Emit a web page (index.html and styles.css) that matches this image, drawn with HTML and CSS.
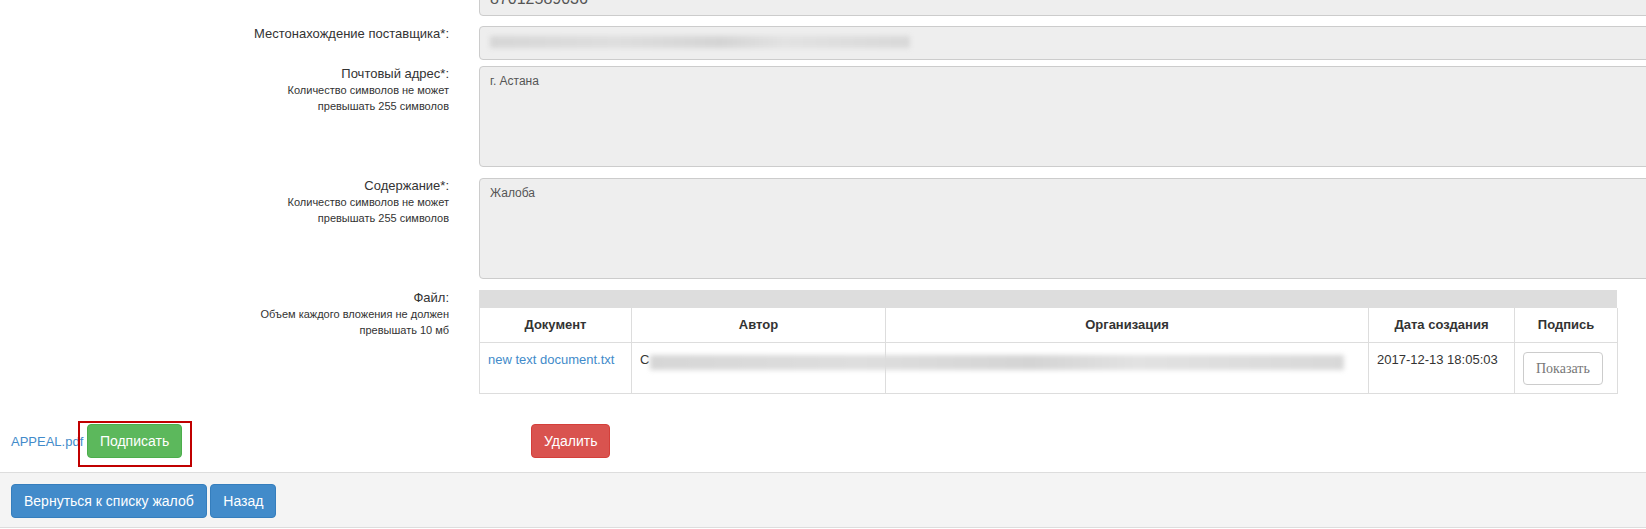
FILE: index.html
```html
<!DOCTYPE html>
<html lang="ru">

<head>
    <meta charset="UTF-8">
    <title>Жалоба</title>
    <link rel="stylesheet" href="styles.css">
</head>

<body>
    <!-- Complaint form -->
    <div class="complaint-form">
        <div class="form-row">
            <div class="form-label">Контактный номер*:</div>
            <div class="form-field">
                <div class="form-control phone">87012589036</div>
            </div>
        </div>

        <div class="form-row row-tight">
            <div class="form-label">Местонахождение поставщика*:</div>
            <div class="form-field">
                <div class="form-control"><span class="redact redact-input"></span></div>
            </div>
        </div>

        <div class="form-row">
            <div class="form-label">
                Почтовый адрес*:
                <small>Количество символов не может<br>превышать 255 символов</small>
            </div>
            <div class="form-field">
                <div class="form-control area">г. Астана</div>
            </div>
        </div>

        <div class="form-row">
            <div class="form-label">
                Содержание*:
                <small>Количество символов не может<br>превышать 255 символов</small>
            </div>
            <div class="form-field">
                <div class="form-control area">Жалоба</div>
            </div>
        </div>

        <div class="form-row">
            <div class="form-label">
                Файл:
                <small>Объем каждого вложения не должен<br>превышать 10 мб</small>
            </div>
            <div class="form-field">
                <div class="files-bar"></div>
                <table class="files-table">
                    <colgroup>
                        <col style="width: 152px">
                        <col style="width: 254px">
                        <col style="width: 483px">
                        <col style="width: 146px">
                        <col style="width: 103px">
                    </colgroup>
                    <thead>
                        <tr>
                            <th>Документ</th>
                            <th>Автор</th>
                            <th>Организация</th>
                            <th>Дата создания</th>
                            <th>Подпись</th>
                        </tr>
                    </thead>
                    <tbody>
                        <tr>
                            <td><a href="#">new text document.txt</a></td>
                            <td class="author-cell">С<span class="redact redact-row"></span></td>
                            <td></td>
                            <td>2017-12-13 18:05:03</td>
                            <td><button class="show-btn">Показать</button></td>
                        </tr>
                    </tbody>
                </table>
            </div>
        </div>
    </div>

    <!-- Sign / delete -->
    <div class="actions">
        <div class="actions-left">
            <a href="#">APPEAL.pdf</a>
            <span class="highlight"><a href="#" class="btn btn-success">Подписать</a></span>
        </div>
        <a href="#" class="btn btn-danger">Удалить</a>
    </div>

    <!-- Footer buttons -->
    <div class="footer-bar">
        <a href="#" class="btn btn-primary">Вернуться к списку жалоб</a>
        <a href="#" class="btn btn-primary">Назад</a>
    </div>
</body>

</html>
```

FILE: styles.css
```css
/* Global Styles */
body {
    margin: 0;
    font-family: "Liberation Sans", Arial, sans-serif;
    font-size: 13px;
    line-height: 18px;
    color: #333;
    background: #fff;
    overflow: hidden;
}

a {
    color: #428bca;
    text-decoration: none;
}

/* Form */
.complaint-form {
    margin-top: -18px;
}

.form-row {
    display: grid;
    grid-template-columns: 464px 1fr;
    margin-bottom: 10px;
}

.form-row.row-tight {
    margin-bottom: 6px;
}

.form-label {
    padding-right: 15px;
    text-align: right;
    line-height: 16px;
}

.form-label small {
    display: block;
    font-size: 11px;
    line-height: 16px;
}

.form-field {
    padding-left: 15px;
}

.form-control {
    position: relative;
    box-sizing: border-box;
    width: 1200px;
    height: 34px;
    padding: 5px 10px;
    font-size: 12px;
    background: #eee;
    border: 1px solid #ccc;
    border-radius: 4px;
    color: #555;
}

.form-control.phone {
    padding-top: 7px;
    font-size: 16px;
    line-height: 18px;
    overflow: hidden;
}

.form-control.area {
    height: 101px;
    margin-bottom: 1px;
}

/* Blurred personal data */
.redact {
    position: absolute;
    background: linear-gradient(to right, #d6d6d6, #dedede 30%, #d4d4d4 55%, #e2e2e2 70%, #d8d8d8);
    filter: blur(2.5px);
}

.redact-input {
    left: 10px;
    top: 9px;
    width: 420px;
    height: 12px;
}

.redact-row {
    left: 18px;
    top: 12px;
    width: 694px;
    height: 15px;
}

/* Files table */
.files-bar {
    width: 1138px;
    height: 18px;
    background: #ddd;
}

.files-table {
    width: 1138px;
    table-layout: fixed;
    border-collapse: collapse;
    border: 1px solid #ddd;
    border-top: none;
}

.files-table th,
.files-table td {
    padding: 8px;
    border: 1px solid #ddd;
    vertical-align: top;
}

.files-table th {
    text-align: center;
    font-weight: bold;
    border-top: none;
}

.author-cell {
    position: relative;
}

.show-btn {
    margin-top: 1px;
    padding: 6px 12px;
    font-family: "Liberation Serif", "Times New Roman", serif;
    font-size: 14px;
    line-height: 19px;
    color: #777;
    background: #fff;
    border: 1px solid #ccc;
    border-radius: 4px;
}

/* Buttons */
.btn {
    display: inline-block;
    padding: 6px 12px;
    font-size: 14px;
    line-height: 20px;
    color: #fff;
    border: 1px solid transparent;
    border-radius: 4px;
}

.btn-success {
    background: #5cb85c;
    border-color: #4cae4c;
}

.btn-danger {
    background: #d9534f;
    border-color: #d43f3a;
}

.btn-primary {
    background: #428bca;
    border-color: #357ebd;
}

/* Actions */
.actions {
    display: flex;
    align-items: center;
    padding: 0 11px;
    margin-top: 30px;
    margin-bottom: 14px;
}

.actions-left {
    width: 520px;
}

.highlight {
    position: relative;
    display: inline-block;
}

.highlight::after {
    content: '';
    position: absolute;
    top: -3px;
    left: -9px;
    right: -10px;
    bottom: -9px;
    border: 2px solid #c00000;
}

/* Footer */
.footer-bar {
    padding: 11px 11px 9px;
    background: #f4f4f4;
    border-top: 1px solid #ddd;
    border-bottom: 1px solid #ddd;
}
```
